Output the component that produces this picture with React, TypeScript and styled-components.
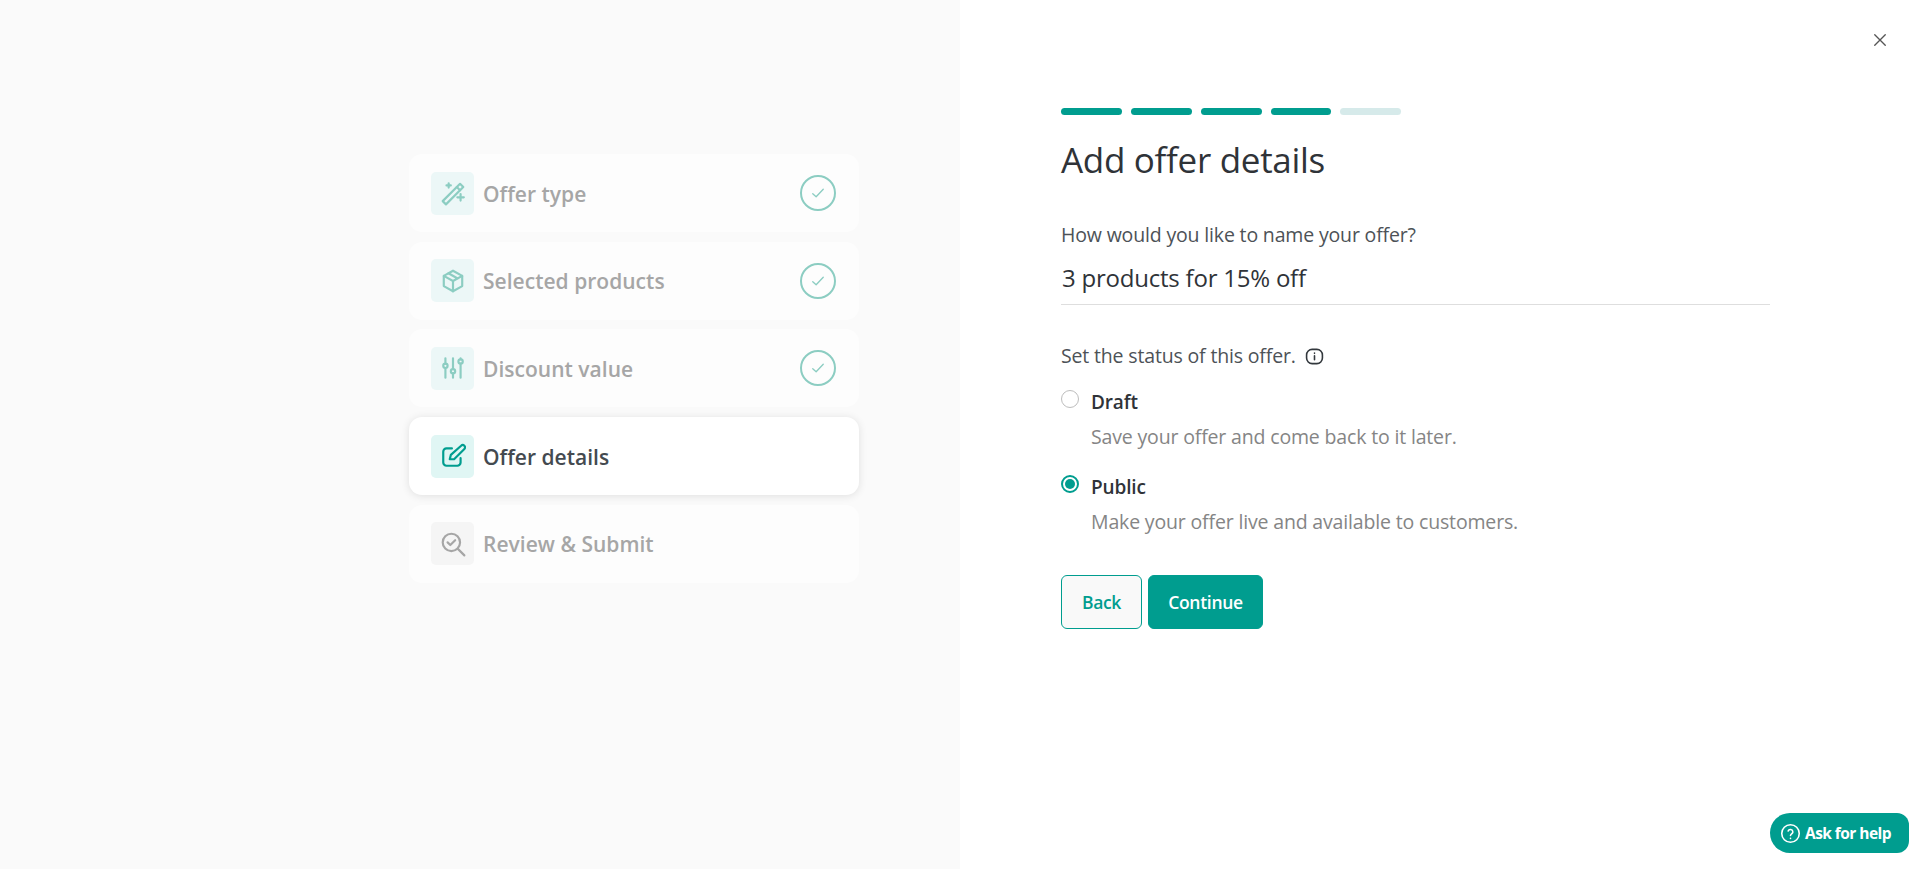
import React from 'react';
import styled, { createGlobalStyle } from 'styled-components';

const GlobalStyle = createGlobalStyle`
    html, body {
        margin: 0;
        padding: 0;
        background: #fff;
        font-family: "Open Sans", "Noto Sans", sans-serif;
    }
    * {
        box-sizing: border-box;
    }
`;

const Page = styled.div`
    display: grid;
    grid-template-columns: 960px 960px;
    height: 869px;
    overflow: hidden;
    position: relative;
`;

const StepsPane = styled.aside`
    background: #fafafa;
    padding: 154px 101px 0 409px;
    display: flex;
    flex-direction: column;
    gap: 9.7px;
`;

const StepCard = styled.div<{ $active?: boolean }>`
    height: 78px;
    border-radius: 13px;
    padding: 0 23px 0 22px;
    display: flex;
    align-items: center;
    background: ${(p) => (p.$active ? '#fff' : '#fdfdfd')};
    box-shadow: ${(p) => (p.$active ? '0 1px 9px rgba(0, 0, 0, 0.11)' : 'none')};
`;

const IconTile = styled.div<{ $tone: 'done' | 'active' | 'todo' }>`
    width: 43px;
    height: 43px;
    border-radius: 5px;
    flex: none;
    display: flex;
    align-items: center;
    justify-content: center;
    background: ${(p) => (p.$tone === 'done' ? '#ecf7f7' : p.$tone === 'active' ? '#e0f6f4' : '#f5f5f5')};
    color: ${(p) => (p.$tone === 'done' ? '#8ccdc2' : p.$tone === 'active' ? '#009d8f' : '#a6a6a6')};
`;

const StepLabel = styled.span<{ $active?: boolean }>`
    margin-left: 9px;
    padding-top: 1px;
    flex: 1;
    font-size: 21px;
    font-weight: 600;
    letter-spacing: 0.02px;
    color: ${(p) => (p.$active ? '#444a50' : '#a6a6a6')};
`;

const DoneMark = styled.div`
    width: 36px;
    height: 36px;
    border: 2px solid #8ccdc2;
    border-radius: 50%;
    display: flex;
    align-items: center;
    justify-content: center;
    color: #8ccdc2;
`;

const FormPane = styled.main`
    padding: 108px 150px 0 101px;
`;

const Progress = styled.div`
    display: flex;
    gap: 9px;
`;

const ProgressBar = styled.div<{ $on?: boolean; $short?: boolean }>`
    width: ${(p) => (p.$short ? '60px' : '61px')};
    height: 7px;
    border-radius: 4px;
    background: ${(p) => (p.$on ? '#009d8f' : '#d6eaea')};
`;

const Title = styled.h1`
    margin: 21px 0 0;
    font-size: 35px;
    line-height: 48px;
    font-weight: 400;
    letter-spacing: -0.3px;
    color: #2f3338;
`;

const FieldLabel = styled.div`
    margin-top: 38px;
    font-size: 19.5px;
    line-height: 26px;
    letter-spacing: -0.16px;
    color: #4d5257;
    display: flex;
    align-items: center;
`;

const NameInput = styled.div`
    margin-top: 12px;
    height: 45px;
    padding: 1px 1px 0;
    font-size: 24px;
    line-height: 34px;
    letter-spacing: -0.22px;
    color: #2f3338;
    border-bottom: 1px solid #dedede;
`;

const StatusLabel = styled(FieldLabel)`
    margin-top: 38px;
`;

const InfoIcon = styled.svg`
    margin-left: 9px;
    color: #33383d;
`;

const RadioRow = styled.div`
    display: flex;
    align-items: flex-start;
    margin-top: 20px;

    & + & {
        margin-top: 24px;
    }
`;

const RadioDot = styled.div<{ $checked?: boolean }>`
    width: 18px;
    height: 18px;
    margin-top: 1px;
    border-radius: 50%;
    flex: none;
    background: #fff;
    border: ${(p) => (p.$checked ? '2px solid #009d8f' : '1px solid #bdbdbd')};
    display: flex;
    align-items: center;
    justify-content: center;
    &::after {
        content: '';
        display: ${(p) => (p.$checked ? 'block' : 'none')};
        width: 10px;
        height: 10px;
        border-radius: 50%;
        background: #009d8f;
    }
`;

const RadioText = styled.div`
    margin-left: 12px;
`;

const RadioTitle = styled.div`
    font-size: 19px;
    line-height: 26px;
    font-weight: 600;
    letter-spacing: -0.15px;
    color: #2f3338;
`;

const RadioHint = styled.div`
    margin-top: 9px;
    font-size: 19.5px;
    line-height: 26px;
    letter-spacing: -0.16px;
    color: #858585;
`;

const Actions = styled.div`
    margin-top: 40px;
    display: flex;
    gap: 6px;
`;

const Button = styled.button<{ $primary?: boolean }>`
    height: 54px;
    border-radius: 6px;
    font-family: inherit;
    font-size: 17.5px;
    font-weight: 600;
    letter-spacing: -0.3px;
    cursor: pointer;
    border: 1px solid #009d8f;
    width: ${(p) => (p.$primary ? '115px' : '81px')};
    background: ${(p) => (p.$primary ? '#009d8f' : '#f9f9f9')};
    color: ${(p) => (p.$primary ? '#fff' : '#009d8f')};
`;

const CloseButton = styled.button`
    position: absolute;
    top: 31px;
    right: 31px;
    width: 18px;
    height: 18px;
    padding: 0;
    border: none;
    background: none;
    color: #555;
    display: flex;
    align-items: center;
    justify-content: center;
`;

const HelpButton = styled.button`
    position: absolute;
    left: 1770px;
    top: 813px;
    width: 139px;
    height: 40px;
    border: none;
    border-radius: 20px 12px 12px 20px;
    background: #009d8f;
    color: #fff;
    font-family: inherit;
    font-size: 15.5px;
    font-weight: 700;
    letter-spacing: -0.55px;
    display: flex;
    align-items: center;
    gap: 4px;
    padding: 0 0 0 10px;
`;

const Icon = ({ size = 26, sw = 2, children }: { size?: number; sw?: number; children: React.ReactNode }) => (
    <svg width={size} height={size} viewBox="0 0 24 24" fill="none" stroke="currentColor" strokeWidth={sw} strokeLinecap="round" strokeLinejoin="round">
        {children}
    </svg>
);

const steps = [
    {
        label: 'Offer type',
        tone: 'done' as const,
        icon: (
            <Icon>
                <path d="M2.5 19.5 18.5 3.5l3 3L5.5 22.5z" />
                <path d="M15.5 6.5l3 3" />
                <path d="M8 3v4M6 5h4" />
                <path d="M19 13v6M16 16h6" />
            </Icon>
        ),
    },
    {
        label: 'Selected products',
        tone: 'done' as const,
        icon: (
            <Icon>
                <path d="M12 2.5l8.5 4.8v9.4L12 21.5l-8.5-4.8V7.3z" />
                <path d="M3.5 7.3 12 12l8.5-4.7M12 12v9.5M7.8 4.9l8.5 4.8" />
            </Icon>
        ),
    },
    {
        label: 'Discount value',
        tone: 'done' as const,
        icon: (
            <Icon>
                <circle cx="5" cy="10" r="2" />
                <path d="M5 3v5M5 12v9" />
                <circle cx="12" cy="15" r="2" />
                <path d="M12 3v10M12 17v4" />
                <circle cx="19" cy="6" r="2" />
                <path d="M19 3v1M19 8v13" />
            </Icon>
        ),
    },
    {
        label: 'Offer details',
        tone: 'active' as const,
        active: true,
        icon: (
            <Icon>
                <path d="M11 5H6a3 3 0 0 0-3 3v10a3 3 0 0 0 3 3h10a3 3 0 0 0 3-3v-4" />
                <path d="M9 15l1-4L19.5 2.5a2 2 0 0 1 3 3L13 15z" />
            </Icon>
        ),
    },
    {
        label: 'Review & Submit',
        tone: 'todo' as const,
        icon: (
            <Icon>
                <circle cx="10.5" cy="10.5" r="8" />
                <path d="M16.5 16.5l6 6M7 10.5l2.5 2.5 4.5-4.5" />
            </Icon>
        ),
    },
];

const App = () => {
    return (
        <Page>
            <GlobalStyle />
            <StepsPane>
                {steps.map((step) => (
                    <StepCard key={step.label} $active={step.active}>
                        <IconTile $tone={step.tone}>{step.icon}</IconTile>
                        <StepLabel $active={step.active}>{step.label}</StepLabel>
                        {step.tone === 'done' && (
                            <DoneMark>
                                <Icon size={18} sw={1.8}>
                                    <path d="M5 13l4.5 4L19 7" />
                                </Icon>
                            </DoneMark>
                        )}
                    </StepCard>
                ))}
            </StepsPane>
            <FormPane>
                <Progress>
                    <ProgressBar $on />
                    <ProgressBar $on />
                    <ProgressBar $on />
                    <ProgressBar $on $short />
                    <ProgressBar />
                </Progress>
                <Title>Add offer details</Title>
                <FieldLabel>How would you like to name your offer?</FieldLabel>
                <NameInput>3 products for 15% off</NameInput>
                <StatusLabel>
                    Set the status of this offer.
                    <InfoIcon width="19" height="19" viewBox="0 0 24 24" fill="none" stroke="currentColor" strokeWidth="2" strokeLinecap="round">
                        <rect x="2" y="3" width="20" height="18" rx="7" />
                        <path d="M12 11v5M12 7.5v.5" />
                    </InfoIcon>
                </StatusLabel>
                <RadioRow>
                    <RadioDot />
                    <RadioText>
                        <RadioTitle>Draft</RadioTitle>
                        <RadioHint>Save your offer and come back to it later.</RadioHint>
                    </RadioText>
                </RadioRow>
                <RadioRow>
                    <RadioDot $checked />
                    <RadioText>
                        <RadioTitle>Public</RadioTitle>
                        <RadioHint>Make your offer live and available to customers.</RadioHint>
                    </RadioText>
                </RadioRow>
                <Actions>
                    <Button>Back</Button>
                    <Button $primary>Continue</Button>
                </Actions>
            </FormPane>
            <CloseButton aria-label="Close">
                <Icon size={20} sw={1.8}>
                    <path d="M5 5l14 14M19 5L5 19" />
                </Icon>
            </CloseButton>
            <HelpButton>
                <Icon size={21} sw={1.8}>
                    <circle cx="12" cy="12" r="10" />
                    <path d="M9.3 9.2a2.8 2.8 0 0 1 5.4 1c0 1.9-2.7 2.3-2.7 4M12 17.5v.3" />
                </Icon>
                Ask for help
            </HelpButton>
        </Page>
    );
};

export default App;
